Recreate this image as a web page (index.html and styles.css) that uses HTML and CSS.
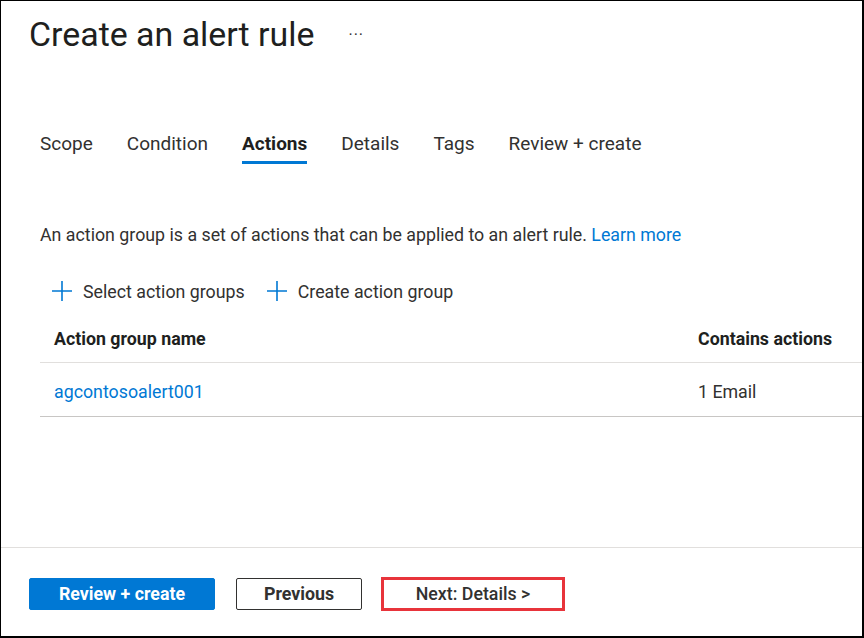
FILE: index.html
```html
<!DOCTYPE html>
<html lang="en">
<head>
<meta charset="utf-8">
<title>Create an alert rule</title>
<link rel="stylesheet" href="styles.css">
</head>
<body>
<div class="frame">
  <header class="title-row">
    <h1 class="title">Create an alert rule</h1>
    <span class="more">···</span>
  </header>

  <nav class="tabs">
    <span class="tab">Scope</span>
    <span class="tab">Condition</span>
    <span class="tab active">Actions</span>
    <span class="tab">Details</span>
    <span class="tab">Tags</span>
    <span class="tab">Review + create</span>
  </nav>

  <section class="content">
    <p class="desc">An action group is a set of actions that can be applied to an alert rule. <a class="link" href="#">Learn more</a></p>

    <div class="toolbar">
      <span class="tool">
        <svg class="plus" viewBox="0 0 20 20" width="20" height="20"><path d="M10 0v20M0 10h20" stroke="#0078d4" stroke-width="1.6" fill="none"/></svg>
        <span>Select action groups</span>
      </span>
      <span class="tool">
        <svg class="plus" viewBox="0 0 20 20" width="20" height="20"><path d="M10 0v20M0 10h20" stroke="#0078d4" stroke-width="1.6" fill="none"/></svg>
        <span>Create action group</span>
      </span>
    </div>

    <div class="grid">
      <div class="row head">
        <div class="cell name">Action group name</div>
        <div class="cell actions">Contains actions</div>
      </div>
      <div class="row body">
        <div class="cell name"><a class="link" href="#">agcontosoalert001</a></div>
        <div class="cell actions">1 Email</div>
      </div>
    </div>
  </section>

  <footer class="footer">
    <button class="btn primary">Review + create</button>
    <button class="btn secondary">Previous</button>
    <span class="highlight"><button class="btn plain">Next: Details &gt;</button></span>
  </footer>
</div>
</body>
</html>
```

FILE: styles.css
```css
* { box-sizing: border-box; }
html, body { margin: 0; padding: 0; background: #fff; }
body {
  font-family: Roboto, "Noto Sans", "Liberation Sans", sans-serif;
  color: #323130;
  width: 864px;
  height: 638px;
}
.frame {
  width: 864px;
  height: 638px;
  border-left: 1px solid #000;
  border-top: 1px solid #000;
  border-right: 2px solid #000;
  border-bottom: 2px solid #000;
  display: flex;
  flex-direction: column;
}
.title-row {
  display: flex;
  align-items: center;
  padding: 11px 0 0 28px;
  height: 56px;
}
.title {
  margin: 0;
  font-size: 33.9px;
  font-weight: 400;
  color: #201f1e;
}
.more {
  margin-left: 34px;
  font-size: 16px;
  color: #323130;
  letter-spacing: 1px;
}
.tabs {
  display: flex;
  gap: 34px;
  padding: 0 0 0 39px;
  margin-top: 74px;
  height: 36px;
  align-items: flex-start;
}
.tab {
  font-size: 19px;
  line-height: 26px;
  color: #323130;
  position: relative;
  padding-bottom: 7px;
}
.tab.active {
  font-weight: 700;
  color: #201f1e;
}
.tab.active::after {
  content: "";
  position: absolute;
  left: 0;
  right: 0;
  bottom: 0;
  height: 3px;
  background: #0078d4;
}
.content {
  padding-left: 39px;
  flex: 1;
}
.desc {
  margin: 56px 0 0 0;
  font-size: 17.8px;
  line-height: 24px;
  color: #323130;
}
.link {
  color: #0078d4;
  text-decoration: none;
}
.toolbar {
  display: flex;
  gap: 22px;
  margin-top: 32px;
  padding-left: 12px;
  height: 24px;
  align-items: center;
}
.tool {
  display: flex;
  align-items: center;
  gap: 11px;
  font-size: 17.8px;
  color: #323130;
}
.plus { display: block; }
.grid {
  margin-top: 12px;
}
.row {
  display: grid;
  grid-template-columns: 658px 1fr;
  align-items: center;
}
.row.head {
  height: 48px;
  border-bottom: 1px solid #e1dfdd;
}
.row.body {
  height: 54px;
  padding-top: 4px;
  border-bottom: 1px solid #c8c6c4;
}
.cell {
  font-size: 17.8px;
  padding-left: 14px;
}
.cell.actions { padding-left: 0; }
.head .cell {
  font-weight: 700;
  color: #201f1e;
}
.footer {
  border-top: 1px solid #e1dfdd;
  height: 89px;
  display: flex;
  align-items: center;
  padding: 3px 0 0 28px;
  gap: 21px;
}
.btn {
  font-family: inherit;
  font-size: 17.8px;
  height: 32px;
  border-radius: 2px;
  font-weight: 700;
  cursor: pointer;
}
.btn.primary {
  background: #0078d4;
  color: #fff;
  border: 1px solid #0078d4;
  width: 186px;
}
.btn.secondary {
  background: #fff;
  color: #323130;
  border: 1px solid #323130;
  width: 126px;
}
.highlight {
  display: flex;
  border: 3px solid #e8343b;
  margin-left: -2px;
}
.btn.plain {
  background: #fff;
  border: none;
  color: #323130;
  width: 178px;
  height: 28px;
  font-weight: 500;
}
```
